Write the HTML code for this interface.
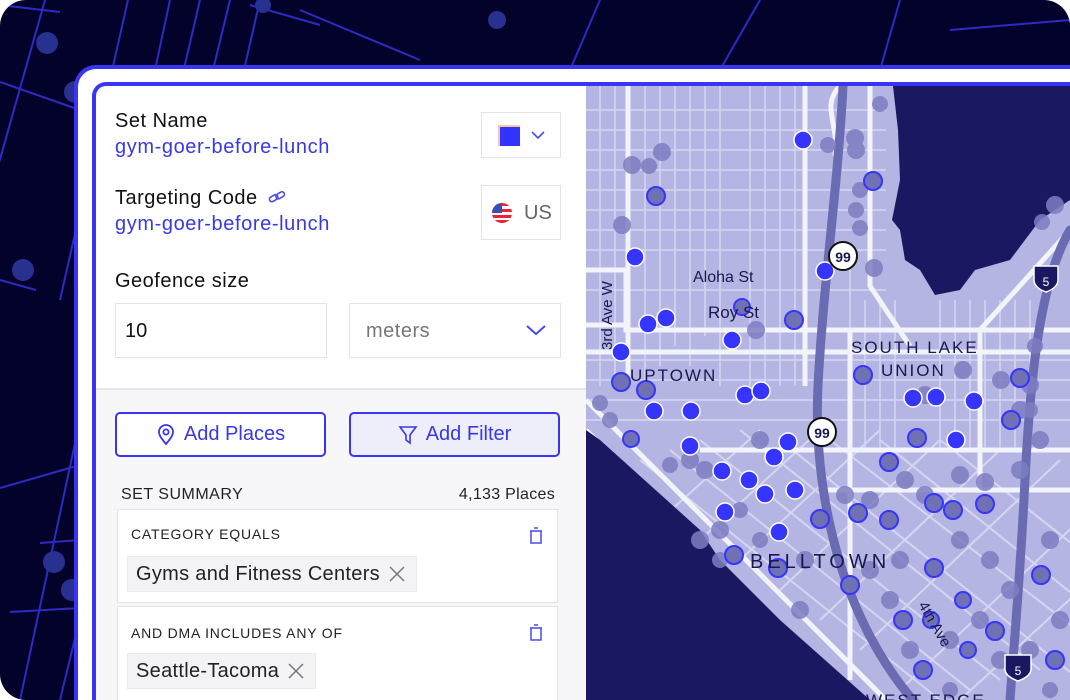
<!DOCTYPE html>
<html><head><meta charset="utf-8">
<style>
*{box-sizing:border-box;margin:0;padding:0}
html,body{width:1070px;height:700px;overflow:hidden}
body{background:#fff;font-family:"Liberation Sans",sans-serif;position:relative}
#wrap{position:absolute;left:0;top:0;width:1070px;height:700px;overflow:hidden}
#bg{position:absolute;left:0;top:0;width:1070px;height:700px;border-radius:26px;overflow:hidden;background:#03022a}
#outer{position:absolute;left:74px;top:65px;width:996px;height:635px;border:4px solid #3a35f5;border-right:none;border-bottom:none;border-radius:22px 0 0 0;background:#fff}
#inner{position:absolute;left:92px;top:82px;width:978px;height:618px;border:4px solid #3a35f5;border-right:none;border-bottom:none;border-radius:14px 0 0 0;background:#fff;overflow:hidden}
#panel{position:absolute;left:0;top:0;width:490px;height:614px;overflow:hidden}
.lbl{position:absolute;left:19px;font-size:20px;color:#111;letter-spacing:.5px}
.lnk{position:absolute;left:19px;font-size:20px;color:#3838e8;letter-spacing:.6px}
.box{position:absolute;border:1.5px solid #e3e3e8;background:#fff}
.btn{position:absolute;top:326px;width:211px;height:45px;border:2px solid #3a35f5;border-radius:5px;color:#3838e8;font-size:20px;display:flex;align-items:center;justify-content:center;gap:8px}
.card{position:absolute;left:21px;width:441px;border:1.5px solid #e3e3e8;background:#fff}
.cap{position:absolute;left:13px;font-size:14px;color:#222;letter-spacing:.8px}
.chip{position:absolute;left:9px;height:36px;background:#f3f3f5;border:1px solid #eaeaee;font-size:20px;color:#222;padding:0 10px 0 8px;display:flex;align-items:center;gap:8px;letter-spacing:.3px}
#map{position:absolute;left:490px;top:0;width:488px;height:614px;overflow:hidden}
</style></head><body><div id="wrap">
<div id="bg">
<svg width="1070" height="700" style="position:absolute;left:0;top:0">
<g stroke="#2d2bc4" stroke-width="2" fill="none">
<line x1="45" y1="0" x2="-20" y2="230"/><line x1="128" y1="0" x2="60" y2="300"/>
<line x1="170" y1="0" x2="20" y2="700"/><line x1="200" y1="0" x2="130" y2="300"/>
<line x1="230" y1="0" x2="60" y2="700"/><line x1="260" y1="0" x2="100" y2="700"/>
<line x1="0" y1="82" x2="80" y2="110"/><line x1="0" y1="280" x2="36" y2="290"/>
<line x1="0" y1="488" x2="80" y2="465"/>
<line x1="40" y1="543" x2="80" y2="540"/><line x1="10" y1="612" x2="80" y2="608"/>
<line x1="0" y1="5" x2="60" y2="12"/><line x1="300" y1="10" x2="420" y2="60"/>
<line x1="600" y1="0" x2="570" y2="70"/><line x1="760" y1="0" x2="720" y2="70"/>
<line x1="900" y1="0" x2="880" y2="70"/><line x1="250" y1="5" x2="320" y2="25"/>
<line x1="950" y1="30" x2="1070" y2="20"/>
</g>
<g fill="#283090"><circle cx="47" cy="43" r="11"/><circle cx="75" cy="92" r="11"/><circle cx="23" cy="270" r="11"/><circle cx="54" cy="562" r="11"/><circle cx="72" cy="590" r="11"/><circle cx="497" cy="20" r="9"/><circle cx="263" cy="5" r="8"/></g>
</svg>
</div>
<div id="outer"></div>
<div id="inner">
<div id="panel">
<div class="lbl" style="top:24px">Set Name</div>
<div class="lnk" style="top:50px">gym-goer-before-lunch</div>
<div class="box" style="left:385px;top:26px;width:80px;height:46px"><div style="position:absolute;left:16px;top:12px;width:22px;height:21px;background:#3333ff;border-top:2px solid #f4c8a0;border-left:2px solid #f4c8a0"></div><svg style="position:absolute;left:48px;top:16px" width="16" height="12"><path d="M2 3l6 6 6-6" stroke="#4a4ae8" stroke-width="1.6" fill="none"/></svg></div>
<div class="lbl" style="top:101px">Targeting Code <svg width="20" height="16" style="vertical-align:-2px;margin-left:3px"><g stroke="#4a4ae8" stroke-width="1.6" fill="none"><rect x="2" y="6" width="9" height="5" rx="2.5" transform="rotate(-30 6 8)"/><rect x="9" y="3" width="9" height="5" rx="2.5" transform="rotate(-30 13 6)"/></g></svg></div>
<div class="lnk" style="top:127px">gym-goer-before-lunch</div>
<div class="box" style="left:385px;top:99px;width:80px;height:55px"><svg style="position:absolute;left:10px;top:17px" width="20" height="20"><defs><clipPath id="c"><circle cx="10" cy="10" r="10"/></clipPath></defs><g clip-path="url(#c)"><rect width="20" height="20" fill="#fff"/><rect y="0" width="20" height="3" fill="#e23"/><rect y="6" width="20" height="3" fill="#e23"/><rect y="12" width="20" height="3" fill="#e23"/><rect y="17" width="20" height="3" fill="#e23"/><rect width="10" height="10" fill="#3b4fb0"/></g></svg><span style="position:absolute;left:42px;top:16px;font-size:20px;color:#666">US</span></div>
<div class="lbl" style="top:184px">Geofence size</div>
<div class="box" style="left:19px;top:217px;width:212px;height:55px;font-size:20px;color:#111;padding:16px 0 0 9px">10</div>
<div class="box" style="left:253px;top:217px;width:212px;height:55px;font-size:20px;color:#777;padding:16px 0 0 16px;letter-spacing:.5px">meters<svg style="position:absolute;left:174px;top:18px" width="24" height="16"><path d="M3 4l9 8 9-8" stroke="#4a4ae8" stroke-width="2" fill="none"/></svg></div>
<div style="position:absolute;left:0;top:302px;width:490px;height:312px;background:#f7f6f9;border-top:2px solid #e6e5ea"></div>
<div class="btn" style="left:19px;background:#fff"><svg width="20" height="22"><path d="M10 20c-5-6-7-9-7-12a7 7 0 0114 0c0 3-2 6-7 12z" stroke="#3838e8" stroke-width="1.8" fill="none"/><circle cx="10" cy="8" r="2.6" stroke="#3838e8" stroke-width="1.8" fill="none"/></svg>Add Places</div>
<div class="btn" style="left:253px;background:#eeedfa"><svg width="20" height="22"><path d="M2 3h16l-6 8v8l-4-3v-5z" stroke="#3838e8" stroke-width="1.6" fill="none"/></svg>Add Filter</div>
<div style="position:absolute;left:25px;top:400px;font-size:16px;color:#222;letter-spacing:.5px">SET SUMMARY</div>
<div style="position:absolute;right:31px;top:400px;font-size:16px;color:#222;letter-spacing:.3px">4,133 Places</div>
<div class="card" style="top:423px;height:94px"><div class="cap" style="top:16px">CATEGORY EQUALS</div><svg style="position:absolute;left:410px;top:17px" width="16" height="18"><path d="M3 4h10v12H3zM2 4h12M6 1h4" stroke="#4a4ae8" stroke-width="1.5" fill="none"/></svg><div class="chip" style="top:46px">Gyms and Fitness Centers<svg width="18" height="18"><path d="M2 2l14 14M16 2L2 16" stroke="#777" stroke-width="1.5"/></svg></div></div>
<div class="card" style="top:520px;height:94px;border-bottom:none"><div class="cap" style="top:18px">AND DMA INCLUDES ANY OF</div><svg style="position:absolute;left:410px;top:17px" width="16" height="18"><path d="M3 4h10v12H3zM2 4h12M6 1h4" stroke="#4a4ae8" stroke-width="1.5" fill="none"/></svg><div class="chip" style="top:46px">Seattle-Tacoma<svg width="18" height="18"><path d="M2 2l14 14M16 2L2 16" stroke="#777" stroke-width="1.5"/></svg></div></div>
</div>
<div id="map">
<svg width="488" height="614" viewBox="586 86 488 614">
<rect x="586" y="86" width="510" height="640" fill="#b5b5e3"/>
<g stroke="#d6d6f2" stroke-width="1.5">
<path d="M600 86v300M615 86v300M645 86v300M660 86v280M675 86v260M690 86v280M705 86v250M720 86v300M750 86v300M765 86v300M780 86v300M795 86v300M850 250v200M865 300v150M880 300v150M895 300v150M940 300v150M955 300v150M970 300v150M985 300v150M1000 300v150M1015 300v150M1030 300v150"/>
<path d="M586 110h300M586 130h300M586 150h300M586 170h300M586 190h300M586 210h300M586 230h300M586 250h300M586 290h300M586 360h500M586 380h500M586 400h500M586 420h500"/>
</g>
<g stroke="#d6d6f2" stroke-width="2" fill="none">
<path d="M640 460l300 240M670 450l300 240M700 440l300 240M740 430l300 240M780 440l300 240M830 440l260 200M880 440l200 160M940 440l140 110M660 520l100-90M700 540l120-110M740 560l140-130M780 590l160-150M820 620l180-170M860 650l200-190M900 690l180-170M960 700l120-110"/>
</g>
<g stroke="#f3f3fb" stroke-width="5" fill="none">
<path d="M586 270h40v60h500"/><path d="M586 325h40"/><path d="M586 352h500"/><path d="M628 86v300"/><path d="M805 86v300"/><path d="M850 330v350"/>
<path d="M586 400l300 300"/><path d="M586 430l270 270"/><path d="M870 86v200l40 60"/><path d="M1070 230l-90 100v160"/><path d="M820 490h260"/><path d="M700 450h380"/>
<path d="M840 86c-20 20 0 40 -5 70"/>
</g>
<path d="M586 430 L600 440 L700 530 L720 560 L780 620 L870 700 L586 700Z" fill="#1a1860"/>
<path d="M893 86 L1070 86 L1070 200 L1040 220 L1010 260 L975 270 L960 290 L935 295 L920 270 L905 260 L900 230 L892 220 L900 180 L898 130Z" fill="#1a1860"/>
<g stroke="#6b6bb3" stroke-width="9" fill="none" stroke-linecap="round">
<path d="M843 86c-5 100-20 200-25 300s20 230 100 320"/>
<path d="M1070 230c-30 50-40 150-45 250s-10 150-15 220"/>
</g>
<g fill="#7d7dc2" opacity=".85">
<circle cx="632" cy="165" r="9"/><circle cx="662" cy="152" r="9"/><circle cx="649" cy="166" r="8"/><circle cx="622" cy="225" r="9"/><circle cx="828" cy="145" r="8"/><circle cx="855" cy="138" r="9"/><circle cx="856" cy="150" r="9"/><circle cx="860" cy="190" r="8"/><circle cx="856" cy="210" r="8"/><circle cx="860" cy="228" r="8"/><circle cx="874" cy="268" r="9"/><circle cx="880" cy="104" r="8"/><circle cx="1055" cy="205" r="9"/><circle cx="1042" cy="222" r="8"/><circle cx="756" cy="330" r="9"/><circle cx="925" cy="395" r="9"/><circle cx="963" cy="370" r="9"/><circle cx="1001" cy="380" r="9"/><circle cx="1030" cy="385" r="9"/><circle cx="1020" cy="410" r="9"/><circle cx="690" cy="460" r="9"/><circle cx="705" cy="470" r="9"/><circle cx="670" cy="465" r="8"/><circle cx="760" cy="440" r="9"/><circle cx="845" cy="495" r="9"/><circle cx="870" cy="500" r="9"/><circle cx="905" cy="480" r="9"/><circle cx="925" cy="495" r="9"/><circle cx="960" cy="475" r="9"/><circle cx="985" cy="482" r="9"/><circle cx="1020" cy="470" r="9"/><circle cx="1040" cy="440" r="9"/><circle cx="700" cy="540" r="9"/><circle cx="720" cy="530" r="9"/><circle cx="740" cy="510" r="8"/><circle cx="760" cy="540" r="8"/><circle cx="805" cy="560" r="9"/><circle cx="870" cy="570" r="9"/><circle cx="900" cy="560" r="9"/><circle cx="960" cy="540" r="9"/><circle cx="990" cy="560" r="9"/><circle cx="1010" cy="590" r="9"/><circle cx="980" cy="620" r="9"/><circle cx="950" cy="640" r="9"/><circle cx="1000" cy="660" r="9"/><circle cx="1030" cy="650" r="9"/><circle cx="1060" cy="620" r="9"/><circle cx="910" cy="650" r="9"/><circle cx="890" cy="600" r="9"/><circle cx="800" cy="610" r="9"/><circle cx="1050" cy="540" r="9"/><circle cx="1050" cy="690" r="8"/><circle cx="950" cy="690" r="8"/><circle cx="720" cy="560" r="8"/><circle cx="600" cy="403" r="8"/><circle cx="610" cy="420" r="8"/><circle cx="1035" cy="346" r="8"/><circle cx="1030" cy="410" r="8"/>
</g>
<g fill="#7070b5" stroke="#3535ff" stroke-width="2">
<circle cx="656" cy="196" r="9"/><circle cx="873" cy="181" r="9"/><circle cx="742" cy="307" r="8"/><circle cx="794" cy="320" r="9"/><circle cx="863" cy="375" r="9"/><circle cx="1020" cy="378" r="9"/><circle cx="621" cy="382" r="9"/><circle cx="646" cy="390" r="9"/><circle cx="1011" cy="420" r="9"/><circle cx="631" cy="439" r="8"/><circle cx="917" cy="438" r="9"/><circle cx="889" cy="462" r="9"/><circle cx="820" cy="519" r="9"/><circle cx="858" cy="513" r="9"/><circle cx="889" cy="520" r="9"/><circle cx="934" cy="503" r="9"/><circle cx="953" cy="510" r="9"/><circle cx="985" cy="504" r="9"/><circle cx="734" cy="555" r="9"/><circle cx="778" cy="568" r="9"/><circle cx="850" cy="585" r="9"/><circle cx="934" cy="568" r="9"/><circle cx="963" cy="600" r="8"/><circle cx="1041" cy="575" r="9"/><circle cx="903" cy="620" r="9"/><circle cx="995" cy="631" r="9"/><circle cx="968" cy="650" r="8"/><circle cx="923" cy="670" r="9"/><circle cx="1055" cy="660" r="9"/><circle cx="931" cy="620" r="8"/>
</g>
<g fill="#3535ff" stroke="#fff" stroke-width="1.5">
<circle cx="803" cy="140" r="9"/><circle cx="635" cy="257" r="9"/><circle cx="825" cy="271" r="9"/><circle cx="648" cy="324" r="9"/><circle cx="666" cy="318" r="9"/><circle cx="732" cy="340" r="9"/><circle cx="621" cy="352" r="9"/><circle cx="745" cy="395" r="9"/><circle cx="761" cy="391" r="9"/><circle cx="654" cy="411" r="9"/><circle cx="691" cy="411" r="9"/><circle cx="913" cy="398" r="9"/><circle cx="936" cy="397" r="9"/><circle cx="974" cy="401" r="9"/><circle cx="956" cy="440" r="9"/><circle cx="690" cy="446" r="9"/><circle cx="774" cy="457" r="9"/><circle cx="788" cy="442" r="9"/><circle cx="722" cy="471" r="9"/><circle cx="749" cy="480" r="9"/><circle cx="765" cy="494" r="9"/><circle cx="795" cy="490" r="9"/><circle cx="725" cy="512" r="9"/><circle cx="779" cy="532" r="9"/>
</g>
<g font-family="Liberation Sans,sans-serif" fill="#1a1850">
<circle cx="843" cy="256" r="14" fill="#fff" stroke="#111" stroke-width="2"/><text x="843" y="262" font-size="14" font-weight="bold" text-anchor="middle">99</text>
<circle cx="822" cy="432" r="14" fill="#fff" stroke="#111" stroke-width="2"/><text x="822" y="438" font-size="14" font-weight="bold" text-anchor="middle">99</text>
<path d="M1034 266h24v14c0 6-6 10-12 12-6-2-12-6-12-12z" fill="#1a1860" stroke="#fff" stroke-width="1.5"/><text x="1046" y="286" font-size="12" fill="#fff" text-anchor="middle">5</text>
<path d="M1005 655h26v14c0 6-7 10-13 12-6-2-13-6-13-12z" fill="#1a1860" stroke="#fff" stroke-width="1.5"/><text x="1018" y="675" font-size="12" fill="#fff" text-anchor="middle">5</text>
<text x="693" y="282" font-size="16">Aloha St</text>
<text x="708" y="318" font-size="17">Roy St</text>
<text x="612" y="350" font-size="15" transform="rotate(-90 612 350)">3rd Ave W</text>
<text x="630" y="381" font-size="17" letter-spacing="2">UPTOWN</text>
<text x="851" y="353" font-size="17" letter-spacing="2">SOUTH LAKE</text>
<text x="881" y="376" font-size="17" letter-spacing="2">UNION</text>
<text x="750" y="568" font-size="20" letter-spacing="4">BELLTOWN</text>
<text x="918" y="605" font-size="15" transform="rotate(60 918 605)">4th Ave</text>
<text x="866" y="706" font-size="17" letter-spacing="2">WEST EDGE</text>
</g>
</svg>
</div>
</div>
</div></body></html>
